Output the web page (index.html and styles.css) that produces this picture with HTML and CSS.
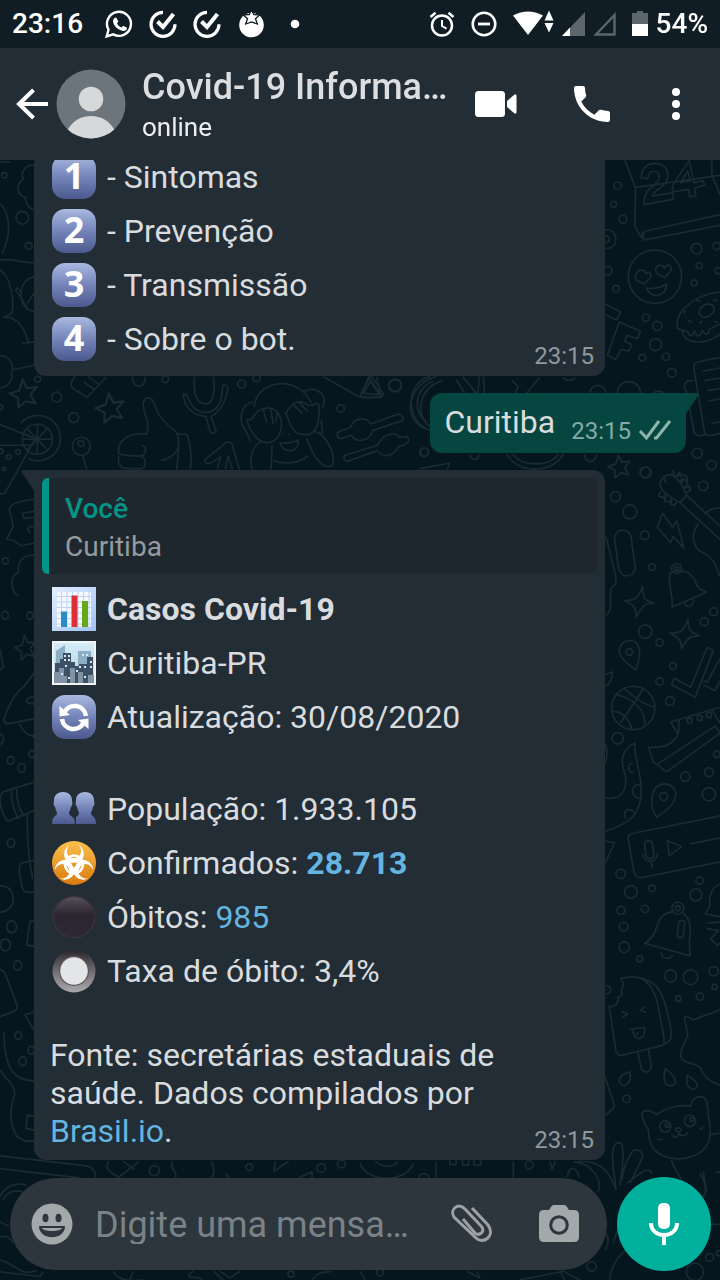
FILE: index.html
```html
<!DOCTYPE html>
<html lang="pt-BR">
<head>
<meta charset="utf-8">
<meta name="viewport" content="width=device-width, initial-scale=1">
<title>Covid-19 Informa…</title>
<link rel="stylesheet" href="styles.css">
</head>
<body>
<svg width="0" height="0" class="defs" aria-hidden="true">
  <defs>
    <linearGradient id="blue" x1="0" y1="0" x2="0" y2="1"><stop offset="0" stop-color="#a9b9e0"/><stop offset=".5" stop-color="#7484b8"/><stop offset="1" stop-color="#4b598f"/></linearGradient>
    <linearGradient id="orange" x1="0" y1="0" x2="0" y2="1"><stop offset="0" stop-color="#fbc04c"/><stop offset="1" stop-color="#d97a10"/></linearGradient>
    <linearGradient id="dark" x1="0" y1="0" x2="0" y2="1"><stop offset="0" stop-color="#55505a"/><stop offset=".45" stop-color="#2b2530"/><stop offset="1" stop-color="#2e2834"/></linearGradient>
    <linearGradient id="ring" x1="0" y1="0" x2="0" y2="1"><stop offset="0" stop-color="#2a252c"/><stop offset=".55" stop-color="#77737a"/><stop offset="1" stop-color="#aaa8ad"/></linearGradient>
    <linearGradient id="paper" x1="0" y1="0" x2="1" y2="1"><stop offset="0" stop-color="#e4eeff"/><stop offset="1" stop-color="#a0c2f4"/></linearGradient>
    <linearGradient id="sky" x1="0" y1="0" x2="0" y2="1"><stop offset="0" stop-color="#d3ecf7"/><stop offset="1" stop-color="#b9cfdf"/></linearGradient>
    <symbol id="star" viewBox="0 0 30 30"><path d="M14 2l4 8 9-1-6 7 5 8-9-2-7 6v-9l-8-4 9-3z"/></symbol>
  </defs>
</svg>

<svg class="wallpaper" viewBox="0 0 720 1280" preserveAspectRatio="xMidYMid slice" aria-hidden="true">
  <g transform="scale(.3333)">
    <g transform="translate(0 450)">
      <circle cx="13" cy="76" r="8"/><circle cx="67" cy="203" r="19"/><circle cx="86" cy="288" r="10"/>
      <path d="M102 46c-24-4-42 20-32 42-24 16-20 48 6 54 2 24 16 34 26 38M0 160c30 30 36 90 6 150M0 330c40-6 60 10 102 8M0 360c30 20 44 80 36 130l-24 12c40-6 66 40 74 82M66 428c-18-12-8-24-20-6 16 10 20 30 40 60M102 380c-40 10-54 60-22 96l22 10M102 430l-20 30M66 580l36-4M0 618c30-2 44 30 34 54 6 20-10 38-34 42M36 660l66-14M30 36H0"/>
    </g>
    <g transform="translate(1080 450)">
      <path d="M795 32l32 82-2 116 20 34 10-20 225-50M845 244l8 26 227-44M827 112l255-36M1056 32v42l24 60"/>
      <path d="M844 84c0-60 80-54 80-8 0 34-40 40-46 62l62-10v20l-88 16c0-60 46-54 46-82 0-26-34-24-34 4zM938 106l50-74 14 66 28-6 4 14-30 8 4 24-18 2-4-22-48 8zM962 98l22-36 6 30z"/>
      <circle cx="773" cy="107" r="11"/><circle cx="761" cy="163" r="9"/><circle cx="789" cy="208" r="12"/><circle cx="1010" cy="296" r="16"/><circle cx="1018" cy="347" r="9"/><circle cx="1002" cy="399" r="9"/><circle cx="768" cy="416" r="10"/><circle cx="743" cy="362" r="13"/><circle cx="858" cy="503" r="11"/><circle cx="892" cy="528" r="14"/><circle cx="887" cy="584" r="18"/><circle cx="847" cy="623" r="10"/><circle cx="918" cy="620" r="11"/><circle cx="936" cy="668" r="13"/><circle cx="1075" cy="362" r="9"/><circle cx="1070" cy="288" r="11"/>
      <circle cx="885" cy="380" r="80"/>
      <path d="M828 376c6-20 26-20 30-6 12-8 20 4 12 14l-18 18c-18-6-30-14-24-26zM888 354c10-14 22-8 26 0 8-14 22-10 20 6l-18 22c-20-4-32-16-28-28zM860 414c26 4 44-2 60-12 0 42-52 44-60 12z"/>
      <path d="M736 240c42-8 42 64 0 54M736 256c16 4 16 20 0 22M736 462l46 24-12 24-34-16"/>
      <path d="M778 516l64 28-10 22-30-10-8 18 22 10-10 20-22-6-18 30-24-12z"/>
      <path d="M1080 426c-90 10-140 70-126 110l30 10c6 20 14 10 20-4 6 20 12 24 24 0 10 16 16 14 20-4l32-16M966 540c6 50 80 42 114 12"/>
      <ellipse cx="1040" cy="482" rx="24" ry="18" transform="rotate(-30 1040 482)"/>
      <path d="M1008 450l14 4M984 512l14 4M1060 514l14 4M970 490l8-8M1018 520l10-6M1060 450l12 2"/>
      <path d="M1080 622l-66 14c-14 4-14 12-12 22l32 190c2 10 10 12 46 2M1000 692c-34-4-28 30-20 32l22 120c4 16 20 14 32 10M1028 664l52-10M1034 692l46-8M1042 722l38-6M1046 754l34-8M1054 820l26-4"/>
      <path d="M0 740l32-66 40 60c-6 8-40 12-72 6M10 730l48 4-26-40z"/><circle cx="106" cy="706" r="18"/>
      <path d="M230 680c-90 20-110 140-20 160M250 690c-70 20-90 100-40 140M290 690l30 50M308 680l50 60M358 680l-4 50M370 680l4 50M455 690l20 20-10 20M540 682l-40 48"/>
      <path d="M690 730a24 24 0 0 1 48 0M772 730a35 35 0 1 1 70 0M880 730a20 16 0 0 1 32 0M610 682a20 16 0 0 0 36 0"/>
      <circle cx="194" cy="907" r="12"/><path d="M440 912c30 60 140 60 170 0M458 912c30 40 110 40 138 0M330 912c4 24 28 20 26 0M675 912c-4 24 28 36 36 0"/>
      <use href="#star" x="738" y="910" width="80" height="80"/>
      <circle cx="1012" cy="910" r="15"/><circle cx="1055" cy="945" r="14"/><circle cx="856" cy="967" r="16"/>
      <path d="M920 1000c-20-26 10-30 30-20 20-14 40 0 30 20M944 974l-8-14M952 976l10-12M180 956l88-16-6 18"/>
    </g>
    <g transform="translate(0 1110)">
      <use href="#star" x="22" y="22" width="98" height="98"/><use href="#star" x="280" y="62" width="100" height="105"/>
      <circle cx="113" cy="28" r="9"/><circle cx="170" cy="81" r="15"/><circle cx="221" cy="143" r="15"/><circle cx="0" cy="112" r="8"/><circle cx="496" cy="28" r="10"/><circle cx="725" cy="42" r="12"/><circle cx="770" cy="24" r="11"/><circle cx="1185" cy="47" r="19"/><circle cx="1022" cy="115" r="11"/><circle cx="1272" cy="247" r="13"/>
      <circle cx="112" cy="208" r="45"/><path d="M112 208V163M112 208v45M112 208h45M112 208H67M112 208l30-32M112 208l30 32M112 208l-30-32M112 208l-30 32M62 160a68 68 0 1 1 22 106"/>
      <path d="M0 164l106 42L14 370l-14 2M0 226h92"/><circle cx="26" cy="261" r="7"/><circle cx="54" cy="246" r="7"/><circle cx="12" cy="297" r="5"/><circle cx="2" cy="244" r="7"/>
      <circle cx="244" cy="229" r="27"/><circle cx="243" cy="221" r="9"/><path d="M248 256l12 42"/>
      <path d="M226 20c-16 16-16 32-4 38l40 24 56-60M252 36l30 22M264 20l32 22M398 20c-4 38 40 40 38 0"/>
      <path d="M430 98c6-20 26-20 34 6 6 24 14 40 66 84 8 10 6 60 0 110M430 98c-4 30 24 60 10 94-50-4-90 14-84 60l36 6h28c20-2 22-26 6-32M356 258c-4 40 10 40 66 38 20-2 16-34 0-38M482 272c30-6 44-20 54-40M534 192l28 2c16 50 12 90 8 104"/>
      <path d="M584 20c-4 40 0 80 32 82 30-2 28-50 24-82M550 72c20-4 12 50 66 56 54-4 50-60 52-82 20-4 18 10 8 40-10 34-30 46-42 54l14 44c-6 10-16 4-18 0l-12-44c-60-4-68-56-68-68z"/>
      <path d="M614 270l64-52c10-4 14 0 18 4l22 76M614 270c4 20 20 10 48-10l-10 36M676 298l8-40 14 40"/>
      <path d="M762 110c14-90 140-90 172-10M760 96c-34 4-50 50-22 88l14 30M908 66c50-24 80 20 58 50"/>
      <path d="M740 150c30 0 16-30 60-36 44-4 58 60 30 92-30 26-70 10-90-56zM790 118l10 40M812 114l8 48M832 126l-4 30"/>
      <path d="M858 130c20-40 44-40 64-26 24 10 30-20 36 10-4 40 0 60-26 78-50 10-60-20-74-62zM880 104l28 28M898 98l24 26"/>
      <path d="M786 214c-30 10-40 60-28 84M816 226l-2 72M944 184c40 10 70 90 50 104-26 12-56-30-74-84M840 220c10 34 60 28 54-10-16 10-40 10-54 10zM820 272c40 14 80 6 104-14M848 190v6M868 190v6M964 150l4 40"/>
      <path d="M1016 186l36-14c10-34 50-30 60-10l84-30c14 4 16 16 10 20l-88 30c-10 36-50 36-64 14l-30 10c-14 0-14-16-8-20zM1036 256l96-30c20-40 60-40 66-24l24-2c8 10 4 18-6 24l-20 6c-20 34-48 34-64 12l-84 30c-14 6-20-10-12-16z"/>
      <path d="M970 20l110 62h64l-14-60M1080 82l26-60 40 58M1290 20c-80 20-70 140 0 160M1300 34c-60 20-60 100-20 120"/>
      <path d="M102 388c-70 10-78 20-72 40l10 40-20 40c30 0 40 26 52 18l30-6M102 424l-34 6 4 16 30-4M102 470c-24-4-20 14-10 18"/><circle cx="16" cy="573" r="9"/><path d="M102 556c-44 0-50 30-46 50-34 20-20 60 0 74"/>
    </g>
    <g transform="translate(0 1680) scale(1 1.186)">
      <circle cx="15" cy="140" r="10"/><circle cx="90" cy="141" r="9"/>
      <use href="#star" x="40" y="186" width="72" height="72"/>
      <path d="M0 226l10 44-10 10M102 286L70 322C40 340 20 380 12 402c-2 8 6 14 14 12l76-12M102 346c-30 4-30 18 0 18M58 414c10 20 24 30 44 32M0 440c14 2 14 24 0 26"/>
      <circle cx="32" cy="507" r="10"/><circle cx="65" cy="526" r="11"/><circle cx="96" cy="491" r="9"/>
      <path d="M102 562L12 586c-24 10-4 70 14 74l76-26M34 580c0 40 10 60 22 76M50 576c0 34 10 60 24 72M82 640c0 60 0 100 16 168M102 760l-34 6c-18 4-8 30-2 60 4 16 14 16 36 14M0 824c24 0 40 12 40 34s-22 32-40 34M102 912l-12 2-10 60 22 4M0 1036c10 2 16 10 20 20l30 68c4 12-4 16-10 18l-40 14M74 1150l28 40M76 1150l26-6M12 1196c0 90 30 122 90 122M0 1290c20 30 44 30 44 64-20 40-10 80 6 104l26 12h26M102 1408l-20-4-4 34 24 4"/>
      <circle cx="33" cy="716" r="11"/><circle cx="35" cy="928" r="15"/><circle cx="16" cy="974" r="15"/><circle cx="53" cy="1026" r="12"/><circle cx="55" cy="1203" r="10"/><circle cx="68" cy="1268" r="11"/><circle cx="94" cy="1240" r="10"/>
    </g>
    <g transform="translate(1770 1320)">
      <circle cx="168" cy="98" r="16"/><circle cx="77" cy="170" r="15"/><circle cx="120" cy="216" r="21"/><circle cx="164" cy="286" r="13"/><circle cx="186" cy="381" r="10"/><circle cx="340" cy="138" r="14"/><circle cx="166" cy="575" r="20"/><circle cx="209" cy="608" r="11"/><circle cx="343" cy="546" r="12"/><circle cx="371" cy="515" r="12"/><circle cx="249" cy="678" r="10"/><circle cx="209" cy="725" r="11"/><circle cx="240" cy="783" r="13"/><circle cx="83" cy="895" r="17"/><circle cx="286" cy="1010" r="14"/><circle cx="357" cy="997" r="13"/><circle cx="357" cy="1063" r="20"/><circle cx="381" cy="943" r="10"/>
      <path d="M270 188c-34-18-66-42-58-60 4-16 16-26 32-24 26 14 34 34 46 62zM270 188l120 110M290 166l100 92"/>
      <path d="M256 112l12-14 10 18-12 12M272 130l12-12 10 14-12 12M284 146l14-8 4 12-12 8M212 154l-6 14 16 6 6-12M228 168l-4 16 14 2 8-12M246 180l-4 12 12 4 8-14M344 222c14-14 28-18 46-18M326 250c-30 40-12 80 16 90 30 12 42 50 48 70"/>
      <path d="M218 220l30 42 12-20 22 84-32-36-8 18-40-46z"/>
      <rect x="80" y="270" width="50" height="138" rx="25" transform="rotate(-8 105 340)"/>
      <path d="M48 290l30 120c4 16-4 30-14 34-8 30 8 70-16 82"/>
      <circle cx="260" cy="386" r="15"/><circle cx="260" cy="386" r="6"/><path d="M240 400c24-14 64-8 76 24 4 18 10 22 34 32l-104 46c6-30-14-70-6-102zM284 490c4 14 26 12 28-12"/>
      <path d="M158 440c0 36 4 40 34 50-30 0-34 10-54 42 2-30-10-40-34-50 30 0 40-6 54-42zM294 538c0 32 4 36 34 50-30 0-34 6-54 38 2-28-10-34-34-46 30 0 40-4 54-42z"/>
      <path d="M138 690c-30-20-48-40-50-54 0-44 54-44 60-10 4 24-4 40-10 64z"/><circle cx="118" cy="636" r="10"/>
      <path d="M46 704l20-8c4 20-10 40-20 44M244 734l10-18 48 26 50-120 18 10-54 140zM340 724l12 2 38-70M340 736l36 16 14-30"/>
      <circle cx="130" cy="804" r="65"/><path d="M80 764c50 10 90 50 84 92M160 744c-20 40-60 90-68 106M104 746c20 20 60 50 90 56M66 816c34-6 54 30 60 52"/>
      <path d="M242 846l148-44M242 846l22 36 4-42M268 870c-10 40-40 56-92 52l14 44 40 30 160-116M204 972l172-114 14 20M390 850l-24-40"/><circle cx="299" cy="842" r="8"/><circle cx="329" cy="834" r="8"/><circle cx="357" cy="825" r="8"/>
      <path d="M46 1074c50 10 76-30 54-90-10-40 10-66 36-74-8 40 20 80 18 150-4 60-30 90-108 114M130 970c-20 0-20 26 2 28M150 1034c-30-4-30 44 2 40M136 1120c-30-30-40 10-26 16M46 910q10 30 0 60"/>
      <path d="M200 1132c-26-40-16-100 26-100 50 10 40 60-26 100z"/><circle cx="221" cy="1070" r="12"/>
    </g>
    <g transform="translate(1770 2400)">
      <path d="M390 48L130 100c-16 4-18 10-14 24l16 92c4 14 10 20 30 16l228-46M164 134c0-16 22-16 24 0l4 30c0 16-22 16-24 0zM158 162c4 30 44 30 44-2M184 184l4 20M232 122l42 18-36 28zM300 132l90-18"/>
      <circle cx="92" cy="222" r="14"/><circle cx="123" cy="276" r="19"/><circle cx="186" cy="265" r="10"/><circle cx="93" cy="331" r="12"/><circle cx="165" cy="327" r="11"/><circle cx="101" cy="380" r="13"/><circle cx="103" cy="442" r="16"/><circle cx="149" cy="477" r="9"/><circle cx="318" cy="285" r="18"/><circle cx="329" cy="242" r="11"/><circle cx="242" cy="528" r="18"/><circle cx="302" cy="532" r="22"/><circle cx="371" cy="514" r="14"/><circle cx="330" cy="590" r="11"/><circle cx="265" cy="596" r="8"/><circle cx="110" cy="897" r="11"/><circle cx="374" cy="561" r="8"/>
      <circle cx="264" cy="325" r="18"/><circle cx="264" cy="325" r="7"/><path d="M246 336c-60 10-30 66-82 94l136 38c4-10-6-30 0-60 6-40-10-60-20-68M214 456c0 26 28 22 34 8M266 370c2-14 20-10 18 2l-4 36c-4 8-18 6-18-2z"/>
      <path d="M390 252c-26 10-34 40-30 66l-14 24 44 8M352 370l38-4M350 386l36 6-24 24 20 20 8-6M46 124l28 4-28 60"/>
      <path d="M92 536c70-20 96 20 110 70l20 106c0 20 4 20-10 26L96 766c-14 2-16-6-18-12L58 620c20 0 28-10 26-26 14-4 14-16 10-26 10-12 8-20-2-32zM150 534c60 10 76 60 94 160 0 30-4 30-30 44M144 758l10 46c8 20 30 12 30-6l-8-48M94 634l20 8-18 12M166 620l-16 12 20 6M118 688l48-6M128 688c4 40 40 36 36-4M142 706v-10M46 556c22 4 22 24 0 26"/>
      <path d="M120 816c-40 10-40 44-14 40 16-8 16-20 14-40zM226 806c40 30 36 50 14 52-20-4-20-24-14-52zM292 826c36 20 36 40 16 42-18-4-18-20-16-42zM390 630l-80 30c-20-14-26-12-26-4l10 50c-10 20-22 40-22 60 4 30 50 20 60 40 10 30 40 44 58 50"/>
      <path d="M200 944c-30-20-44-10-44 0 4 20 10 34 20 46-4 90 90 96 130 80 60-20 60-70 50-118-4-30 0-60-24-62-20 0-24 10-30 28-30-4-70 4-102 26z"/><circle cx="226" cy="980" r="17"/><circle cx="300" cy="963" r="17"/><circle cx="232" cy="976" r="6"/><circle cx="306" cy="959" r="6"/>
      <path d="M256 990c4-8 16-8 18 0-4 8-14 8-18 0zM246 1004c4 12 20 10 22-4 6 12 22 8 24-4M200 1018l18 2M328 990l12-8M244 1080c10 30 20 40 30 58M360 1004l30-4M46 830c10 40 24 70 28 90l-28 28"/>
    </g>
    <g transform="translate(0 3450)">
      <path d="M0 18l260 30c20 4 28 20 26 40M0 56l240 28M0 140c20-40 60-40 80-34M8 150c20-30 40-30 60-24M0 216l28 14M0 262c20-6 30 0 40 18M0 366l120 14 10-14M0 330c60 20 60 50 110 32"/>
      <path d="M326 34c-14 20 0 30 30 48l60-46M370 34l34 24M516 34c-8 30 20 30 10 52M634 34c10 20 10 40 0 50M826 34l-4 30 44-30M896 84l40-18v20M676 70l12 16"/><circle cx="463" cy="62" r="15"/><circle cx="748" cy="52" r="10"/><circle cx="964" cy="54" r="13"/><circle cx="1024" cy="42" r="12"/>
      <path d="M340 364c10 30 60 30 90 26M580 364c-40 30 20 10 26 26M640 364l30 26M660 364l30 20 30-20M400 364l-10 26M936 390c20-30 40-20 60-26"/><circle cx="873" cy="373" r="9"/>
    </g>
    <g transform="translate(1080 3300)">
      <path d="M0 190c20 60 140 60 160 0M46 184c20 20 60 20 66 0M228 184v54M460 184v54M270 180v14h18v-14M308 180v16h18v-16M342 180v16h20v-16M570 184l6 24 10-24M176 238c4-24 30-20 32 0"/><circle cx="508" cy="195" r="12"/>
      <path d="M622 232c4-40 30-30 36 2M640 186c60 4 90 60 74 90M656 184c60 0 90 20 112 86M768 270c-4-50-16-90-8-124 6-24 28-24 28 0 4 30 0 60-8 110M786 240c4-40 20-70 34-88 16-6 32 4 26 24l-36 74M800 250l50-36q20-8 26 6M786 350l-26 80M740 400c10 20 0 50-6 46M820 430c-50 40-70 80-70 110M1020 220c20 30 20 60 10 70M1040 276l-10-60M1050 373h30M1068 220l12-4"/>
      <circle cx="695" cy="500" r="14"/><circle cx="1049" cy="473" r="12"/><circle cx="1077" cy="460" r="8"/><circle cx="1005" cy="516" r="26"/><circle cx="60" cy="518" r="10"/>
      <path d="M0 514l16 26M320 514l40 20-10-20M480 540l130-26 50 26M600 514l14 26"/>
    </g>
  </g>
</svg>

<main class="app">
  <header class="top">
    <div class="status">
      <span class="clock">23:16</span>
      <div class="notices" aria-hidden="true">
        <svg viewBox="0 0 28 28" class="line"><path d="M1.600 26.500l1.900-6.800a12 12 0 1 1 4.800 4.700z" stroke-width="2.400"/><path fill="#fff" stroke="none" d="M9.500 8l1.800-.5 2 4-1.300 2c1 2 2.600 3.200 4.600 4l1.600-1.800 3.800 2c0 2.400-2.200 3.600-4.200 3.200-5.400-1.200-9-5.200-9.700-9.200-.1-1.500.4-3 1.400-3.700z"/></svg>
        <svg viewBox="0 0 28 28" class="line"><path d="M14 2.300a12 12 0 1 0 12 12" stroke-width="3.200"/><path d="M8.500 11.500l5.500 5.500L24.500 4" stroke-width="4"/></svg>
        <svg viewBox="0 0 28 28" class="line"><path d="M14 2.300a12 12 0 1 0 12 12" stroke-width="3.200"/><path d="M8.500 11.500l5.500 5.500L24.500 4" stroke-width="4"/></svg>
        <svg viewBox="0 0 28 28"><circle cx="14.500" cy="15" r="12.300" fill="#fff"/><path d="M14.500-.5l2.300 5 6 .3-4.300 4 1.800 5.200-5.800-2-5.800 2 1.800-5.200-4.300-4 6-.3z" fill="#fff" stroke="#101d24" stroke-width="1.300"/></svg>
        <svg viewBox="0 0 28 28"><circle cx="14" cy="14" r="4.300" fill="#fff"/></svg>
      </div>
      <div class="system" aria-hidden="true">
        <svg viewBox="0 0 26 26" width="26" height="26" class="line"><circle cx="13" cy="14.500" r="10" stroke-width="2.500"/><path d="M13 9v6l4.500 2.700" stroke-width="2"/><path d="M1.500 6l5-4.200M24.500 6l-5-4.200" stroke-width="2.500"/></svg>
        <svg viewBox="0 0 26 26" width="26" height="26" class="line"><circle cx="13" cy="13" r="11.300" stroke-width="2.500"/><path d="M7 13h12" stroke-width="2.800"/></svg>
        <svg viewBox="0 0 41 26" width="41" height="26"><path d="M0 4.500Q15-3.500 30 4.500L15 24z" fill="#fff"/><path d="M31.500 9.500L36-.5l4.500 10zM31.500 12h9L36 21.500z" fill="#fff"/></svg>
        <svg class="signal" viewBox="0 0 24 26" width="24" height="26"><path d="M1 25L24 1v24z" fill="#5d666b"/><path d="M1 25l8-8.500V25z" fill="#fff"/></svg>
        <svg class="signal" viewBox="0 0 24 26" width="24" height="26"><path d="M4 23.500L22.500 4v19.500z" fill="none" stroke="#5d666b" stroke-width="2.400"/></svg>
        <svg class="battery" viewBox="0 0 16 26" width="16" height="26"><path d="M5 0h6v2h5v11H0V2h5z" fill="#5d666b"/><path d="M0 13h16v12H0z" fill="#fff"/></svg>
        <span class="percent">54%</span>
      </div>
    </div>
    <div class="bar">
      <button class="back" aria-label="Voltar"><svg viewBox="0 0 32 32"><path d="M32 16H3M17.500 2L3 16l14.500 14" fill="none" stroke="#fff" stroke-width="4"/></svg></button>
      <svg class="avatar" viewBox="0 0 70 70" aria-hidden="true"><clipPath id="face"><circle cx="35" cy="35" r="34.500"/></clipPath><g clip-path="url(#face)"><path d="M0 0h70v70H0z" fill="#6c757b"/><g fill="#d6d8da"><circle cx="35" cy="30" r="12.300"/><path d="M11 62c5-10 14-15 24-15s19 5 24 15v8H11z"/></g></g></svg>
      <div class="who">
        <h1>Covid-19 Informa…</h1>
        <p>online</p>
      </div>
      <button class="video" aria-label="Chamada de vídeo"><svg viewBox="0 0 42 28" width="42" height="28" fill="#fff"><rect x="0" y="1" width="30" height="26" rx="3.500"/><path d="M32 11l7-6q2.500-2 2.500 1v16q0 3-2.500 1l-7-6z"/></svg></button>
      <button class="phone" aria-label="Ligar"><svg viewBox="3 3 18 18" width="36" height="36" fill="#fff"><path d="M20 15.500c-1.250 0-2.450-.2-3.570-.57a1 1 0 0 0-1.020.24l-2.200 2.200a15.050 15.050 0 0 1-6.590-6.590l2.200-2.200a1 1 0 0 0 .25-1.020A11.400 11.400 0 0 1 8.500 4c0-.55-.45-1-1-1H4c-.55 0-1 .45-1 1 0 9.390 7.610 17 17 17 .55 0 1-.45 1-1v-3.500c0-.55-.45-1-1-1z"/></svg></button>
      <button class="menu" aria-label="Mais opções"><svg viewBox="0 0 8 32" width="8" height="32" fill="#fff"><circle cx="4" cy="4" r="4"/><circle cx="4" cy="16" r="4"/><circle cx="4" cy="28" r="4"/></svg></button>
    </div>
  </header>

  <section class="chat">
    <article class="bubble received">
      <div class="content">
        <div class="text">
          <p class="item"><span class="key">1</span>- Sintomas</p>
          <p class="item"><span class="key">2</span>- Prevenção</p>
          <p class="item"><span class="key">3</span>- Transmissão</p>
          <p class="item"><span class="key">4</span>- Sobre o bot.</p>
        </div>
        <time>23:15</time>
      </div>
    </article>

    <article class="bubble sent">
      <p>Curitiba</p>
      <time>23:15</time>
      <svg class="ticks" viewBox="0 0 32 20" width="32" height="20" aria-hidden="true"><path d="M1 11l6.500 7L20 1M15 18h2.500L31 1" fill="none" stroke="#8fb4ae" stroke-width="3"/></svg>
      <svg class="tail" viewBox="0 0 14 24" aria-hidden="true"><path d="M0 0h12q3 0 1 3L0 22z" fill="#054740"/></svg>
    </article>

    <article class="bubble received first">
      <svg class="tail" viewBox="0 0 14 24" aria-hidden="true"><path d="M14 0H2Q-1 0 1 3l13 19z" fill="#232d35"/></svg>
      <blockquote>
        <strong>Você</strong>
        <p>Curitiba</p>
      </blockquote>
      <div class="content">
        <div class="text">
          <p class="item"><svg viewBox="0 0 44 44" aria-hidden="true"><path d="M0 0h44v44H0z" fill="url(#paper)"/><path d="M5 5h34v35H5z" fill="#f4f9ff"/><path d="M5 9.500h34M5 15h34M5 20.500h34M5 26h34M5 31.500h34M5 37h34M9.500 5v35M15 5v35M20.500 5v35M26 5v35M31.500 5v35M37 5v35" stroke="#bcd2f0"/><path d="M9 24.500h6V40H9z" fill="#2c8ac4"/><path d="M19.500 8.500h6V40h-6z" fill="#dd3036"/><path d="M30 14h6v26h-6z" fill="#62a818"/></svg><b>Casos Covid-19</b></p>
          <p class="item"><svg viewBox="0 0 44 44" aria-hidden="true"><path d="M0 0h44v44H0z" fill="#f1f5f5"/><path d="M2 2h40v40H2z" fill="url(#sky)"/><path d="M4 10l9-6v8h5v30H4zM26 10h13v30H26z" fill="#8cafc5"/><path d="M3 22h5v-4h3v-6h8v9h4v4h4v-2h8v-7h6v26H3z" fill="#3d5166"/><path d="M2 31h5v-4h5v8h3v7H2zM18 27h5v15h-5zM26 31h5v11h-5zM36 34h6v8h-6z" fill="#8193a4"/><path d="M12 15h2M16 15h2M12 19h2M16 19h2M30 14h2M34 14h2M13 25h2M27 26h2M32 26h2M38 21h2M38 26h2M24 30h2M9 33h2M16 37h2M32 36h2" stroke="#d6e8f2" stroke-width="2"/></svg>Curitiba-PR</p>
          <p class="item"><svg viewBox="0 0 44 44" aria-hidden="true"><rect width="44" height="44" rx="13" fill="url(#blue)"/><path d="M12 18a11.500 11.500 0 0 1 22 3M32 27a11.500 11.500 0 0 1-22-3" fill="none" stroke="#fff" stroke-width="4.600"/><path d="M7.500 11v10.500L18 20zM36.500 34V23.500L26 25z" fill="#fff"/></svg>Atualização: 30/08/2020</p>
          <p class="gap"></p>
          <p class="item"><svg viewBox="0 0 44 44" aria-hidden="true"><g fill="url(#blue)"><path d="M2 14C1 2 21 2 20 14c1 3 0 5-1 6-1 4-2 5-2 6 0 4 6 2 6 11H0c0-9 5-7 5-11 0-1-1-2-2-6-1-1-2-3-1-6z"/><path d="M24 14c-1-12 19-12 18 0 1 3 0 5-1 6-1 4-2 5-2 6 0 4 5 2 5 11H24c0-4 0-5 0-7 2-1 3-2 3-4 0-1-1-2-2-6-1-1-2-3-1-6z"/></g></svg>População: 1.933.105</p>
          <p class="item"><svg viewBox="0 0 44 44" aria-hidden="true"><circle cx="22" cy="22" r="22" fill="url(#orange)"/><circle cx="22" cy="23.500" r="9" fill="none" stroke="#fff" stroke-width="2.600"/><g fill="#fff"><path id="horn" d="M17 4C9 10 11 22 22 22s13-12 5-18c4 6 2 13-5 13s-9-7-5-13z"/><use href="#horn" transform="rotate(120 22 23.500)"/><use href="#horn" transform="rotate(240 22 23.500)"/></g><circle cx="22" cy="23.500" r="2" fill="#e8962a"/></svg><span>Confirmados: <a href="#confirmados"><b>28.713</b></a></span></p>
          <p class="item"><svg viewBox="0 0 44 44" aria-hidden="true"><circle cx="22" cy="22" r="21.500" fill="#38323c"/><circle cx="22" cy="22" r="20" fill="url(#dark)"/></svg><span>Óbitos: <a href="#obitos">985</a></span></p>
          <p class="item"><svg viewBox="0 0 44 44" aria-hidden="true"><circle cx="22" cy="22" r="21.500" fill="url(#ring)"/><circle cx="22" cy="22" r="15" fill="#5b575e"/><circle cx="22" cy="22" r="13.800" fill="#e4e5e6"/></svg>Taxa de óbito: 3,4%</p>
          <p class="gap"></p>
          <p>Fonte: secretárias estaduais de saúde. Dados compilados por <a href="#brasil">Brasil.io</a>.</p>
        </div>
        <time>23:15</time>
      </div>
    </article>
  </section>

  <form class="composer">
    <div class="field">
      <button type="button" class="emoji" aria-label="Emoji"><svg viewBox="0 0 42 42"><circle cx="21" cy="21" r="20.500" fill="#a3a8ab"/><g fill="#2c363c"><ellipse cx="14.500" cy="15" rx="3" ry="4.300"/><ellipse cx="27.500" cy="15" rx="3" ry="4.300"/><path d="M8 23h26c0 15-26 15-26 0z"/></g><path d="M11 25h20c-1 4-19 4-20 0z" fill="#a3a8ab"/></svg></button>
      <input type="text" aria-label="Mensagem" placeholder="Digite uma mensa…">
      <button type="button" class="clip" aria-label="Anexar"><svg viewBox="0 0 42 38"><path d="M22 3l16 17c8 11-5 20-12 13L4 12C-1 4 9-3 15 4l17 18c3 6-4 9-7 6L13 14" fill="none" stroke="#9ca1a5" stroke-width="3"/></svg></button>
      <button type="button" class="camera" aria-label="Câmera"><svg viewBox="0 0 40 38"><path d="M12 2q1-2 3-2h10q2 0 3 2l2 3h5q5 0 5 5v22q0 5-5 5H5q-5 0-5-5V10q0-5 5-5h5z" fill="#a3a8ab"/><circle cx="20" cy="20" r="8.300" fill="none" stroke="#2c363c" stroke-width="3"/></svg></button>
    </div>
    <button type="button" class="mic" aria-label="Gravar áudio"><svg viewBox="0 0 30 42" width="30" height="42"><rect x="9" y="0" width="12" height="26" rx="5" fill="#fff"/><path d="M2 20c0 16 26 16 26 0M15 31v11" fill="none" stroke="#fff" stroke-width="4"/></svg></button>
  </form>
</main>
</body>
</html>
```
FILE: styles.css
```css
* {
  box-sizing: border-box;
}

body {
  margin: 0;
  background: #06161e;
  color: #d9dcdf;
  font-family: Roboto, "Liberation Sans", sans-serif;
  font-size: 32px;
  line-height: 38px;
}

p,
h1,
blockquote {
  margin: 0;
}

svg {
  display: block;
  flex: none;
  overflow: visible;
}

button {
  flex: none;
  margin: 0;
  padding: 0;
  border: 0;
  background: none;
}

a {
  color: #65b5e1;
  text-decoration: none;
}

.defs {
  position: absolute;
}

.wallpaper {
  position: fixed;
  inset: 0;
  width: 100%;
  height: 100%;
  overflow: hidden;
  fill: none;
  stroke: #1a2b33;
  stroke-width: 5;
  stroke-linejoin: round;
}

.wallpaper use {
  stroke-width: 2;
}

.app {
  position: relative;
  display: flex;
  flex-direction: column;
  height: 100vh;
}

.top {
  z-index: 1;
  flex: none;
  background: #232d35;
}

.status {
  display: flex;
  align-items: center;
  height: 48px;
  padding: 0 12px;
  background: #101d24;
  color: #fff;
  font-size: 28px;
  font-weight: 500;
  line-height: 32px;
}

.line {
  fill: none;
  stroke: #fff;
}

.notices {
  display: flex;
  gap: 16px;
  margin-left: 22px;
}

.notices svg {
  width: 28px;
  height: 28px;
}

.system {
  display: flex;
  align-items: center;
  gap: 16px;
  margin-left: auto;
}

.signal {
  margin-left: -9px;
}

.battery {
  margin-right: -8px;
}

.bar {
  display: flex;
  align-items: center;
  height: 112px;
  padding: 0 40px 0 16px;
}

.back svg {
  width: 32px;
  height: 32px;
}

.avatar {
  width: 70px;
  height: 70px;
  margin: 0 16px 0 8px;
}

.who {
  flex: 1;
  min-width: 0;
  padding-top: 2px;
}

.who h1 {
  overflow: hidden;
  color: #dcdee0;
  font-size: 36px;
  font-weight: 500;
  line-height: 44px;
  white-space: nowrap;
}

.who p {
  color: #eceeef;
  font-size: 26px;
  line-height: 36px;
}

.phone {
  margin: 0 62px 0 57px;
}

.chat {
  display: flex;
  flex: 1;
  flex-direction: column;
  justify-content: flex-end;
  gap: 17px;
  min-height: 0;
  padding: 0 34px;
  overflow: hidden;
}

.bubble {
  position: relative;
  flex: none;
  border-radius: 12px;
}

.received {
  margin-right: 81px;
  padding: 8px 7px 10px 8px;
  background: #232d35;
}

.first {
  border-top-left-radius: 0;
}

.content {
  display: flex;
  align-items: flex-end;
  gap: 8px;
  padding: 0 4px 0 8px;
}

.text {
  flex: 1;
}

.item {
  display: flex;
  align-items: center;
  gap: 11px;
  height: 54px;
  padding-left: 2px;
}

.item > svg {
  width: 44px;
  height: 44px;
}

.gap {
  height: 38px;
}

.key {
  width: 44px;
  height: 44px;
  border-radius: 13px;
  background: linear-gradient(#a9b9e0, #7484b8 50%, #4b598f);
  color: #fff;
  font-family: "Open Sans", sans-serif;
  font-size: 36px;
  font-weight: 700;
  line-height: 42px;
  text-align: center;
}

time {
  color: #92989c;
  font-size: 24px;
  line-height: 20px;
}

.tail {
  position: absolute;
  top: 0;
  width: 14px;
  height: 24px;
}

.received .tail {
  left: -13px;
}

.sent .tail {
  right: -13px;
}

.sent {
  display: flex;
  align-items: center;
  align-self: flex-end;
  height: 60px;
  padding: 0 15px 2px;
  border-top-right-radius: 0;
  background: #054740;
}

.sent time {
  margin: 18px 8px 0 16px;
  color: #85aaa5;
}

.ticks {
  margin-top: 16px;
}

blockquote {
  margin-bottom: 8px;
  padding: 12px 16px 8px;
  border-left: 7px solid #019587;
  border-radius: 6px;
  background: #1f272e;
  color: #969b9f;
  font-size: 28px;
}

blockquote strong {
  display: block;
  color: #019587;
  font-weight: 500;
}

.composer {
  display: flex;
  flex: none;
  align-items: center;
  gap: 10px;
  padding: 17px 9px 9px 10px;
}

.field {
  display: flex;
  flex: 1;
  align-items: center;
  min-width: 0;
  height: 92px;
  padding: 0 28px 0 21px;
  border-radius: 46px;
  background: #2c363c;
}

.field input {
  flex: 1;
  min-width: 0;
  margin: 0 20px;
  padding: 2px 2px 0;
  border: 0;
  outline: 0;
  background: none;
  color: #d9dcdf;
  font: inherit;
  font-size: 36px;
}

.field input::placeholder {
  color: #7b8287;
  opacity: 1;
}

.emoji svg {
  width: 42px;
  height: 42px;
}

.clip svg {
  width: 42px;
  height: 38px;
}

.camera {
  margin-left: 47px;
}

.camera svg {
  width: 40px;
  height: 38px;
}

.mic {
  display: grid;
  place-items: center;
  width: 94px;
  height: 94px;
  border-radius: 50%;
  background: #00af9c;
}
```
